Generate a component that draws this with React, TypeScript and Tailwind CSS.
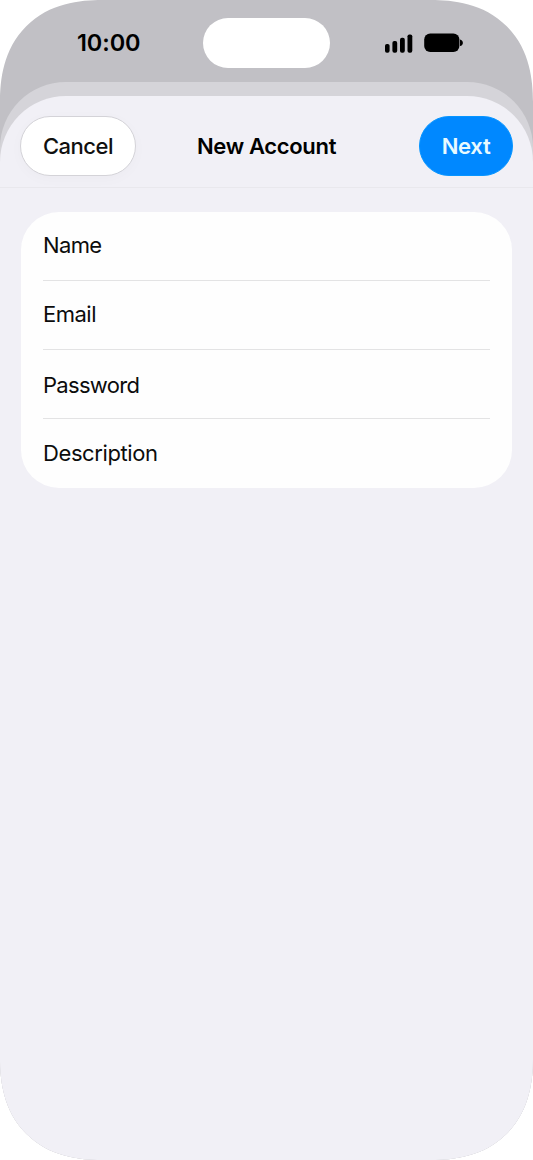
const fields = [
  { label: "Name", className: "h-[69px] pb-px tracking-[-0.65px]" },
  { label: "Email", className: "h-[69px] pb-px tracking-[-0.5px]" },
  { label: "Password", className: "h-[69px] pt-[3px] tracking-[-0.7px]" },
  { label: "Description", className: "h-[69px] pb-px tracking-[-0.4px]" },
];

function SignalIcon() {
  return (
    <svg width="28" height="19" viewBox="0 0 28 19" fill="black" aria-hidden="true">
      <rect x="0" y="9.9" width="4.6" height="8.8" rx="1.9" />
      <rect x="7.4" y="7" width="4.8" height="11.7" rx="1.9" />
      <rect x="15" y="3.8" width="4.8" height="14.9" rx="1.9" />
      <rect x="22.5" y="0.4" width="4.8" height="18.3" rx="1.9" />
    </svg>
  );
}

function BatteryIcon() {
  return (
    <svg className="-mt-px" width="39" height="20" viewBox="0 0 39 20" fill="black" aria-hidden="true">
      <rect x="0.2" y="0.5" width="35.2" height="18.5" rx="6" />
      <path d="M36 6.6c1.7.4 2.9 1.7 2.9 3.3s-1.2 2.8-2.9 3.2z" />
    </svg>
  );
}

function StatusBar() {
  return (
    <header className="relative flex h-[82px] items-start justify-between pt-[34px] pr-[70px] pl-[77px]">
      <span className="-mt-px text-[23.5px] leading-[20px] font-semibold tracking-[-0.1px]">10:00</span>
      <div className="absolute top-[18px] left-[203px] h-[50px] w-[127px] rounded-[25px] bg-white" />
      <div className="flex items-start gap-[11px]">
        <SignalIcon />
        <BatteryIcon />
      </div>
    </header>
  );
}

export default function App() {
  return (
    <div className="h-[1160px] w-[533px] bg-white font-['Inter','Liberation_Sans',sans-serif] text-black">
      <div className="flex h-full flex-col overflow-hidden rounded-[88px] bg-[#c1c0c5] supports-[corner-shape:squircle]:rounded-[102px] supports-[corner-shape:squircle]:[corner-shape:superellipse(1.22)]">
        <StatusBar />
        <div className="flex flex-1 flex-col rounded-t-[66px] bg-[#d5d4d9] pt-[14px]">
          <main className="flex-1 rounded-t-[66px] bg-[#f1f0f6]">
            <nav className="grid h-[92px] grid-cols-[1fr_auto_1fr] items-start border-b border-[#e9e8ed] px-[20px] pt-5">
              <button className="h-[60px] w-[116px] rounded-full border border-[#d4d3d8] bg-white pt-px text-[22px] font-medium tracking-[-0.5px] text-[#101010] shadow-[0_3px_14px_rgba(0,0,0,0.025)]">
                Cancel
              </button>
              <h1 className="flex h-[60px] items-center pt-px text-[22px] font-semibold tracking-[-0.33px] whitespace-nowrap">New Account</h1>
              <button className="h-[60px] w-[94px] justify-self-end rounded-full border border-[#0795ff] bg-[#0088ff] pt-px text-[22px] font-semibold tracking-[-0.3px] text-[#e8faff]">
                Next
              </button>
            </nav>
            <form className="mx-[21px] mt-6 h-[276px] rounded-[38px] bg-[#fefefe] px-[22px]">
              {fields.map((field, index) => (
                <div
                  key={field.label}
                  className={`flex items-center text-[22px] text-[#0c0c0c] ${field.className} ${index < 3 ? "border-b border-[#e3e3e4]" : ""}`}
                >
                  {field.label}
                </div>
              ))}
            </form>
          </main>
        </div>
      </div>
    </div>
  );
}
